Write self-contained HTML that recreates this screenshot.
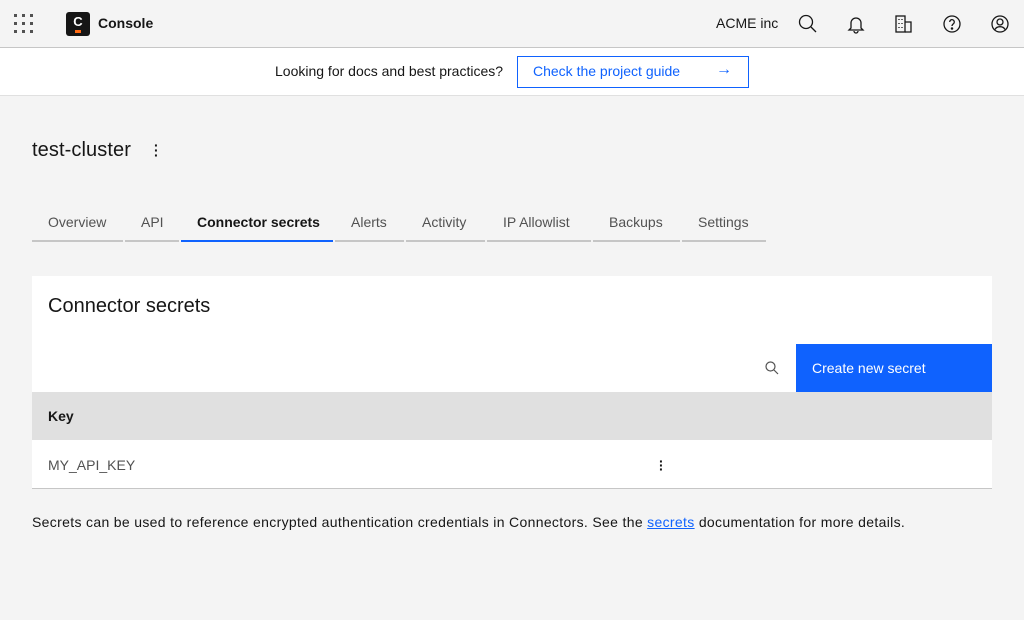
<!DOCTYPE html>
<html><head><style>
*{margin:0;padding:0;box-sizing:border-box}
body{width:1024px;height:620px;background:#f4f4f4;font-family:"Liberation Sans",sans-serif;color:#161616;position:relative;overflow:hidden}
.hdr{position:absolute;left:0;top:0;width:1024px;height:48px;background:#f4f4f4;border-bottom:1px solid #c6c6c6}
.ab{position:absolute}
.banner{position:absolute;top:48px;left:0;width:1024px;height:48px;background:#fff;border-bottom:1px solid #e0e0e0}
.tab{position:absolute;top:202px;height:40px;border-bottom:2px solid #c6c6c6;font-size:14px;color:#525252;padding:12px 16px 0;white-space:nowrap}
.tab.a{border-bottom:2px solid #0f62fe;color:#161616;font-weight:bold}
</style></head><body>
<div class="hdr">
 <svg class="ab" style="left:14px;top:14px" width="20" height="20" fill="#525252">
  <rect x="0" y="0" width="3" height="3"/><rect x="8" y="0" width="3" height="3"/><rect x="16" y="0" width="3" height="3"/>
  <rect x="0" y="8" width="3" height="3"/><rect x="8" y="8" width="3" height="3"/><rect x="16" y="8" width="3" height="3"/>
  <rect x="0" y="16" width="3" height="3"/><rect x="8" y="16" width="3" height="3"/><rect x="16" y="16" width="3" height="3"/>
 </svg>
 <div class="ab" style="left:66px;top:12px;width:24px;height:24px;background:#161616;border-radius:3px;color:#fff;font-weight:bold;font-size:13px;text-align:center;line-height:20px">C<div style="position:absolute;left:9px;top:18px;width:6px;height:3px;background:#ff6a13"></div></div>
 <div class="ab" style="left:98px;top:15px;font-size:14px;font-weight:bold">Console</div>
 <div class="ab" style="left:716px;top:15px;font-size:14px">ACME inc</div>
 <svg class="ab" style="left:796px;top:12px" width="24" height="24" fill="none" stroke="#161616" stroke-width="1.3"><circle cx="10" cy="10" r="6.5"/><path d="M15 15l5 5"/></svg>
 <svg class="ab" style="left:844px;top:12px" width="24" height="24" fill="none" stroke="#161616" stroke-width="1.3"><path d="M7 16V11a5 5 0 0110 0v5l2 2H5z"/><path d="M10 19a2 2 0 004 0"/></svg>
 <svg class="ab" style="left:892px;top:12px" width="24" height="24" fill="none" stroke="#161616" stroke-width="1.3"><rect x="4" y="4" width="9" height="16"/><path d="M13 10h6v10h-6"/><path d="M7 7v1M10 7v1M7 11v1M10 11v1M7 15v1M10 15v1"/></svg>
 <svg class="ab" style="left:940px;top:12px" width="24" height="24" fill="none" stroke="#161616" stroke-width="1.3"><circle cx="12" cy="12" r="8"/><path d="M9.7 10a2.3 2.3 0 114 1.5c-1 .7-1.7 1.2-1.7 2.5"/><circle cx="12" cy="16.5" r=".6" fill="#161616"/></svg>
 <svg class="ab" style="left:988px;top:12px" width="24" height="24" fill="none" stroke="#161616" stroke-width="1.3"><circle cx="12" cy="12" r="8"/><circle cx="12" cy="10" r="3"/><path d="M7 17.5c1-2 3-2.8 5-2.8s4 .8 5 2.8"/></svg>
</div>
<div class="banner">
 <div class="ab" style="left:275px;top:15px;font-size:14px">Looking for docs and best practices?</div>
 <div class="ab" style="left:517px;top:8px;width:232px;height:32px;border:1px solid #0f62fe;color:#0f62fe;font-size:14px;padding:6px 15px">Check the project guide<span style="position:absolute;right:16px;top:4px;font-size:16px">→</span></div>
</div>
<div class="ab" style="left:32px;top:139px;font-size:20px;letter-spacing:.1px">test-cluster</div>
<div class="ab" style="left:154px;top:143px;font-size:14px;font-weight:bold;line-height:5px;width:4px;text-align:center">·<br>·<br>·</div>
<div class="tab" style="left:32px;width:91px">Overview</div>
<div class="tab" style="left:125px;width:54px">API</div>
<div class="tab a" style="left:181px;width:152px">Connector secrets</div>
<div class="tab" style="left:335px;width:69px">Alerts</div>
<div class="tab" style="left:406px;width:79px">Activity</div>
<div class="tab" style="left:487px;width:104px">IP Allowlist</div>
<div class="tab" style="left:593px;width:87px">Backups</div>
<div class="tab" style="left:682px;width:84px">Settings</div>
<div class="ab" style="left:32px;top:276px;width:960px;height:213px;background:#fff;border-bottom:1px solid #c6c6c6">
 <div class="ab" style="left:16px;top:19px;font-size:20px">Connector secrets</div>
 <svg class="ab" style="left:732px;top:84px" width="16" height="16" fill="none" stroke="#525252" stroke-width="1.2"><circle cx="6.5" cy="6.5" r="4.5"/><path d="M10 10l4 4"/></svg>
 <div class="ab" style="left:764px;top:68px;width:196px;height:48px;background:#0f62fe;color:#fff;font-size:14px;padding:16px 16px">Create new secret</div>
 <div class="ab" style="left:0;top:116px;width:960px;height:48px;background:#e0e0e0;font-size:14px;font-weight:bold;padding:16px">Key</div>
 <div class="ab" style="left:16px;top:181px;font-size:14px;color:#525252">MY_API_KEY</div>
 <div class="ab" style="left:627px;top:183px;font-size:14px;font-weight:bold;line-height:4px;width:4px;text-align:center">·<br>·<br>·</div>
</div>
<div class="ab" style="left:32px;top:514px;font-size:14px;letter-spacing:.33px;white-space:nowrap">Secrets can be used to reference encrypted authentication credentials in Connectors. See the <span style="color:#0f62fe;text-decoration:underline">secrets</span> documentation for more details.</div>
</body></html>
